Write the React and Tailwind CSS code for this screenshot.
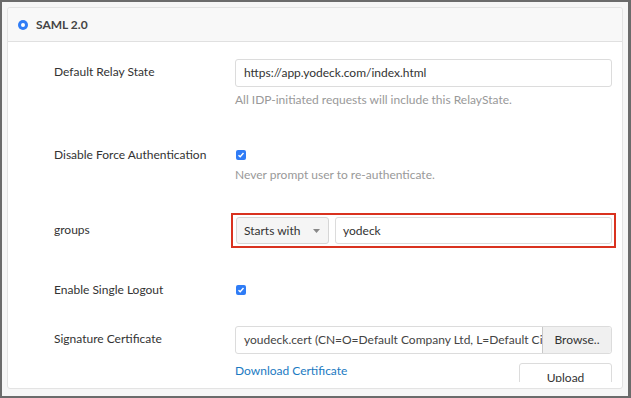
const font = { fontFamily: "Lato, 'Open Sans', sans-serif" };

function Checkbox() {
  return (
    <span className="flex h-[10px] w-[10px] items-center justify-center rounded-[2px] bg-[#2f7cf6]">
      <svg width="8" height="8" viewBox="0 0 8 8">
        <path d="M1.5 4.2 L3.2 5.8 L6.5 2" fill="none" stroke="white" strokeWidth="1.4" />
      </svg>
    </span>
  );
}

function Row({ label, children, className = "" }) {
  return (
    <div className={`flex ${className}`}>
      <div className="w-[227px] shrink-0 pl-[46px] text-[12px] leading-[16px] text-[#333]">{label}</div>
      <div className="min-w-0 flex-1 pr-[10px]">{children}</div>
    </div>
  );
}

export default function App() {
  return (
    <div
      className="h-[398px] w-[631px] overflow-hidden border-2 border-r-[3px] border-[#6b6b6b] bg-[#f6f6f6] p-[5px] leading-[16px]"
      style={font}
    >
      <div className="h-[382px] rounded-[3px] border border-[#e3e3e3] bg-white">
        {/* HEADER */}
        <div className="flex h-[34px] items-center gap-[8px] rounded-t-[3px] border-b border-[#e0e0e0] bg-[#f8f8f8] pl-[10px]">
          <span className="flex h-[10px] w-[10px] items-center justify-center rounded-full bg-[#2f7cf6]">
            <span className="h-[4px] w-[4px] rounded-full bg-white" />
          </span>
          <span className="text-[12px] font-bold text-[#444]">SAML 2.0</span>
        </div>

        {/* BODY */}
        <div className="h-[340px] overflow-hidden pt-[17px]">
          <Row label={<div className="pt-[5px]">Default Relay State</div>}>
            <div className="flex h-[28px] items-center rounded-[3px] border border-[#dcdcdc] pl-[8px] text-[12px] text-[#333]">
              https://app.yodeck.com/index.html
            </div>
            <div className="mt-[5px] text-[12px] text-[#999]">
              All IDP-initiated requests will include this RelayState.
            </div>
          </Row>

          <Row label="Disable Force Authentication" className="mt-[39px]">
            <div className="pl-[1px] pt-[3px]">
              <Checkbox />
            </div>
            <div className="mt-[7px] text-[12px] text-[#999]">Never prompt user to re-authenticate.</div>
          </Row>

          <Row label={<div className="pt-[9px]">groups</div>} className="mt-[30px]">
            <div className="-ml-[4px] -mr-[4px] flex gap-[6px] border-2 border-[#d9321f] py-[2px] pl-[3px] pr-[2px]">
              <div className="flex h-[27px] w-[93px] items-center justify-between rounded-[3px] border border-[#d6d6d6] bg-[#f5f5f5] pl-[7px] pr-[8px] text-[12px] text-[#333]">
                Starts with
                <svg width="7" height="4" viewBox="0 0 7 4">
                  <path d="M0 0 H7 L3.5 4 Z" fill="#888" />
                </svg>
              </div>
              <div className="flex h-[27px] flex-1 items-center rounded-[3px] border border-[#dcdcdc] pl-[7px] text-[12px] text-[#333]">
                yodeck
              </div>
            </div>
          </Row>

          <Row label="Enable Single Logout" className="mt-[34px] items-center">
            <div className="pl-[1px]">
              <Checkbox />
            </div>
          </Row>

          <Row label={<div className="pt-[5px]">Signature Certificate</div>} className="mt-[28px]">
            <div className="flex h-[28px] rounded-[3px] border border-[#dcdcdc]">
              <div className="flex min-w-0 flex-1 items-center overflow-hidden whitespace-nowrap pl-[8px] text-[12px] text-[#444]">
                youdeck.cert (CN=O=Default Company Ltd, L=Default City, ST=Default)
              </div>
              <div className="flex w-[69px] shrink-0 items-center justify-center rounded-r-[3px] border-l border-[#c8c8c8] bg-[#f0f0f0] text-[12px] text-[#333]">
                Browse..
              </div>
            </div>
            <div className="flex items-start justify-between">
              <span className="mt-[9px] text-[12px] text-[#1b7ac2]">Download Certificate</span>
              <div className="mt-[9px] flex h-[28px] w-[93px] items-center justify-center rounded-[3px] border border-[#dcdcdc] pt-[2px] text-[12px] text-[#333]">
                Upload
              </div>
            </div>
          </Row>
        </div>
      </div>
    </div>
  );
}
